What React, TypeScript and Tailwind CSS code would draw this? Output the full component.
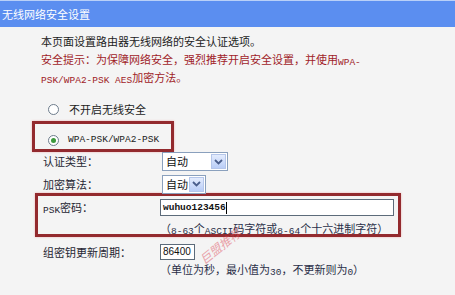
const cjk = { fontFamily: '"Noto Sans CJK SC", "Noto Sans", sans-serif' };

// half-width latin runs look like SimSun's monospaced latin
const M = ({ children, bold }: { children: React.ReactNode; bold?: boolean }) => (
  <span
    className={`text-[9.5px] leading-none align-[-1px] ${bold ? "font-bold" : ""}`}
    style={{ fontFamily: '"Liberation Mono", monospace' }}
  >
    {children}
  </span>
);

const Radio = ({ checked }: { checked?: boolean }) => (
  <span className="w-[11px] h-[11px] rounded-full border border-[#6d7c8c] bg-white flex items-center justify-center shrink-0">
    {checked && <span className="w-[5px] h-[5px] rounded-full bg-[#3d9a3d]" />}
  </span>
);

const Select = ({ w }: { w: string }) => (
  <div className={`${w} h-[19px] bg-white border border-[#8aa0bd] flex items-center justify-between pl-[3px]`}>
    <span className="text-[11px] text-[#111] leading-none">自动</span>
    <span className="w-[15px] h-[15px] mr-[1px] bg-gradient-to-b from-[#e4ecfd] to-[#b9cdf7] border border-[#b5c6ea] flex items-center justify-center">
      <svg width="9" height="6" viewBox="0 0 9 6">
        <path d="M1 1 L4.5 4.5 L8 1" fill="none" stroke="#4a5e8c" strokeWidth="1.8" />
      </svg>
    </span>
  </div>
);

export default function App() {
  return (
    <div className="w-[455px] h-[295px] bg-[#f4f4f4] overflow-hidden relative" style={cjk}>
      <div className="h-[27px] bg-[#5b8ef0] border-t border-[#b9d0f8] flex items-center pl-[2px]">
        <span className="text-white text-[11px]">无线网络安全设置</span>
      </div>

      <div className="pl-[41px] pt-[5px] text-[11px] leading-[18px]">
        <div className="h-[18px] text-[#1c1c1c]">本页面设置路由器无线网络的安全认证选项。</div>
        <div className="h-[18px] text-[#a01c28]">
          安全提示：为保障网络安全，强烈推荐开启安全设置，并使用<M>WPA-</M>
        </div>
        <div className="h-[18px] text-[#a01c28]">
          <M>PSK/WPA2-PSK AES</M>加密方法。
        </div>
      </div>

      <div className="mt-[14px] h-[18px] pl-[48px] flex items-center gap-[10px] text-[11px] text-[#1c1c1c]">
        <Radio />
        <span>不开启无线安全</span>
      </div>

      <div className="ml-[32px] mt-[3px] w-[142px] h-[31px] border-[3px] border-[#932a2e] shadow-[0_0_2px_#f0b0b0] pl-[13px] pt-[9px]">
        <div className="h-[14px] flex items-center gap-[9px] text-[#1c1c1c]">
          <Radio checked />
          <M>WPA-PSK/WPA2-PSK</M>
        </div>
      </div>

      <div className="pl-[43px] text-[11px] text-[#262633]">
        <div className="h-[19px] flex items-center">
          <span className="w-[119px]">认证类型：</span>
          <Select w="w-[66px]" />
        </div>
        <div className="h-[18px] mt-[4px] flex items-center">
          <span className="w-[119px]">加密算法：</span>
          <Select w="w-[44px]" />
        </div>
      </div>

      <div className="ml-[35px] w-[366px] h-[44px] border-[3px] border-[#932a2e] shadow-[0_0_2px_#f0b0b0] pl-[5px] pt-[3px] text-[11px]">
        <div className="h-[17px] flex items-center">
          <span className="block w-[117px] leading-[17px] text-[#262633]">
            <M>PSK</M>密码：
          </span>
          <div className="w-[234px] h-[17px] bg-white border border-[#5c6b7a] flex items-center pl-[2px] text-[#111]">
            <M bold>wuhuo123456</M>
            <span className="w-px h-[12px] bg-black" />
          </div>
        </div>
        <div className="mt-[4px] ml-[117px] h-[16px] leading-[16px] text-[#2a2f48]">
          （<M>8-63</M>个<M>ASCII</M>码字符或<M>8-64</M>个十六进制字符）
        </div>
      </div>

      <div className="pl-[43px] mt-[7px] text-[11px]">
        <div className="h-[16px] flex items-center">
          <span className="w-[117px] text-[#262633]">组密钥更新周期：</span>
          <div className="w-[35px] h-[16px] bg-white border border-[#5c6b7a] flex items-center pl-[2px]">
            <span className="text-[10px] leading-none text-[#111]" style={{ fontFamily: '"Liberation Sans", sans-serif' }}>
              86400
            </span>
          </div>
        </div>
        <div className="mt-[1px] ml-[117px] h-[16px] leading-[16px] text-[#2a2f48]">
          （单位为秒，最小值为<M>30</M>，不更新则为<M>0</M>）
        </div>
      </div>

      <div className="absolute left-[196px] top-[240px] -rotate-[38deg] text-[12px] leading-none text-[#e0505f] opacity-50 italic pointer-events-none">
        巨盟推荐
      </div>
    </div>
  );
}
